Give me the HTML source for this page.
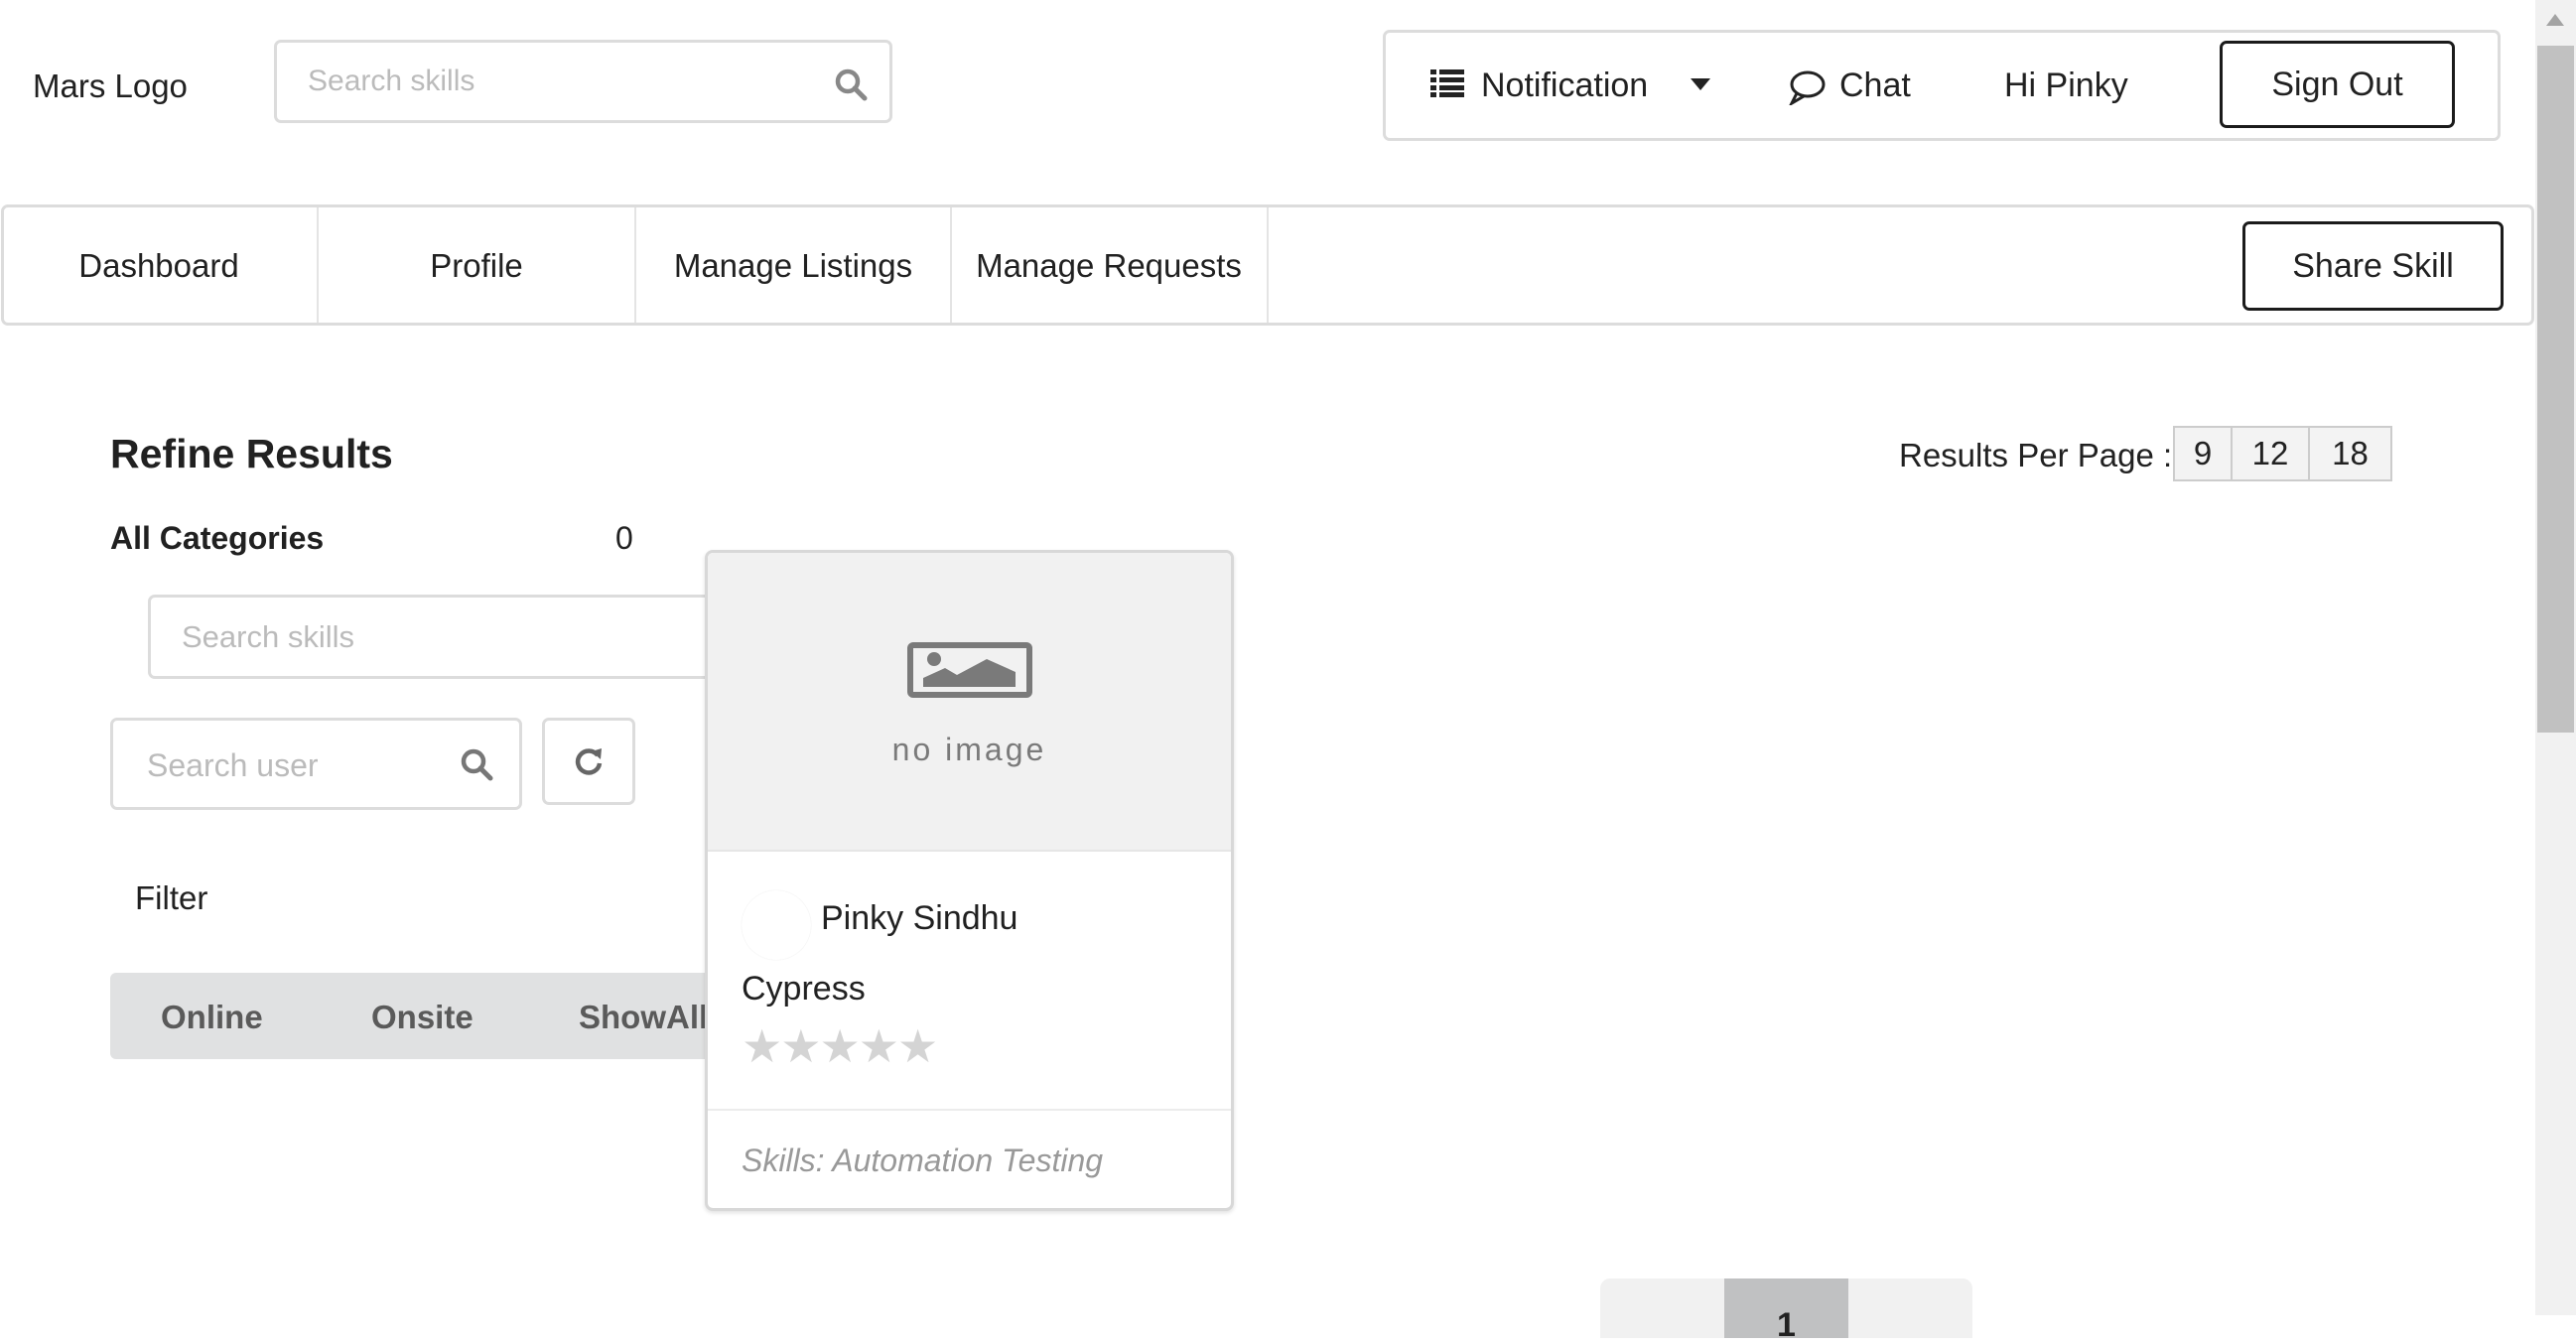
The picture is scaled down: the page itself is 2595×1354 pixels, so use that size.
<!DOCTYPE html>
<html><head><meta charset="utf-8"><style>
*{box-sizing:border-box;margin:0;padding:0}
body{width:2595px;height:1325px;overflow:hidden;background:#fff;font-family:"Liberation Sans",sans-serif;color:#212121;position:relative}
.a{position:absolute}
.t{position:absolute;white-space:nowrap;line-height:1}
.box{position:absolute;border:3px solid #dcdcdc;border-radius:7px;background:#fff}
.ph{color:#bbb}
.btn{position:absolute;border:3px solid #1b1b1b;border-radius:7px;display:flex;align-items:center;justify-content:center;font-size:34px}
</style></head><body>
<div class="t" style="left:33px;top:70px;font-size:33px">Mars Logo</div>
<div class="box" style="left:276px;top:40px;width:623px;height:84px"></div>
<div class="t ph" style="left:310px;top:67px;font-size:30px">Search skills</div>
<svg class="a" style="left:840px;top:68px" width="34" height="34" viewBox="0 0 34 34"><circle cx="14" cy="14" r="10" fill="none" stroke="#888" stroke-width="4.5"/><line x1="21" y1="21" x2="31" y2="31" stroke="#888" stroke-width="5" stroke-linecap="round"/></svg>

<div class="box" style="left:1393px;top:30px;width:1126px;height:112px"></div>
<svg class="a" style="left:1441px;top:70px" width="34" height="28" viewBox="0 0 34 28"><g fill="#222"><rect x="0" y="0" width="6" height="5"/><rect x="9" y="0" width="25" height="5"/><rect x="0" y="8" width="6" height="5"/><rect x="9" y="8" width="25" height="5"/><rect x="0" y="16" width="6" height="5"/><rect x="9" y="16" width="25" height="5"/><rect x="0" y="23" width="6" height="5"/><rect x="9" y="23" width="25" height="5"/></g></svg>
<div class="t" style="left:1492px;top:69px;font-size:34px">Notification</div>
<svg class="a" style="left:1703px;top:79px" width="20" height="12"><polygon points="0,0 20,0 10,12" fill="#222"/></svg>
<svg class="a" style="left:1801px;top:70px" width="38" height="36" viewBox="0 0 38 36"><ellipse cx="20" cy="15" rx="16" ry="12" fill="none" stroke="#222" stroke-width="3"/><path d="M9 24 L4 34 L16 27" fill="none" stroke="#222" stroke-width="3"/></svg>
<div class="t" style="left:1853px;top:69px;font-size:34px">Chat</div>
<div class="t" style="left:2019px;top:69px;font-size:34px">Hi Pinky</div>
<div class="btn" style="left:2236px;top:41px;width:237px;height:88px">Sign Out</div>

<div class="box" style="left:1px;top:206px;width:2552px;height:122px"></div>
<div class="a" style="left:319px;top:209px;width:2px;height:116px;background:#e4e4e4"></div>
<div class="a" style="left:639px;top:209px;width:2px;height:116px;background:#e4e4e4"></div>
<div class="a" style="left:957px;top:209px;width:2px;height:116px;background:#e4e4e4"></div>
<div class="a" style="left:1276px;top:209px;width:2px;height:116px;background:#e4e4e4"></div>
<div class="t" style="left:0;width:320px;text-align:center;top:251px;font-size:33px">Dashboard</div>
<div class="t" style="left:320px;width:320px;text-align:center;top:251px;font-size:33px">Profile</div>
<div class="t" style="left:640px;width:318px;text-align:center;top:251px;font-size:33px">Manage Listings</div>
<div class="t" style="left:958px;width:318px;text-align:center;top:251px;font-size:33px">Manage Requests</div>
<div class="btn" style="left:2259px;top:223px;width:263px;height:90px">Share Skill</div>

<div class="a" style="left:2554px;top:0;width:41px;height:1325px;background:#f1f1f1"></div>
<div class="a" style="left:2556px;top:46px;width:37px;height:692px;background:#c1c1c1"></div>
<svg class="a" style="left:2565px;top:14px" width="18" height="12"><polygon points="0,12 18,12 9,0" fill="#a3a3a3"/></svg>

<div class="t" style="left:111px;top:437px;font-size:41px;font-weight:bold">Refine Results</div>
<div class="t" style="left:111px;top:526px;font-size:32px;font-weight:bold">All Categories</div>
<div class="t" style="left:620px;top:526px;font-size:32px">0</div>
<div class="box" style="left:149px;top:599px;width:600px;height:85px"></div>
<div class="t ph" style="left:183px;top:626px;font-size:31px">Search skills</div>
<div class="box" style="left:111px;top:723px;width:415px;height:93px"></div>
<div class="t ph" style="left:148px;top:755px;font-size:32px">Search user</div>
<svg class="a" style="left:463px;top:753px" width="34" height="34" viewBox="0 0 34 34"><circle cx="14" cy="14" r="10" fill="none" stroke="#777" stroke-width="4.5"/><line x1="21" y1="21" x2="31" y2="31" stroke="#777" stroke-width="5" stroke-linecap="round"/></svg>
<div class="box" style="left:546px;top:723px;width:94px;height:88px"></div>
<svg class="a" style="left:577px;top:751px" width="32" height="32" viewBox="0 0 32 32"><path d="M25 10 A11 11 0 1 0 27 18" fill="none" stroke="#666" stroke-width="4.5"/><polygon points="19,6 29,3 28,14" fill="#666"/></svg>
<div class="t" style="left:136px;top:888px;font-size:33px">Filter</div>
<div class="a" style="left:111px;top:980px;width:650px;height:87px;background:#e0e1e2;border-radius:6px"></div>
<div class="t" style="left:162px;top:1008px;font-size:33px;font-weight:bold;color:#5a5a5a">Online</div>
<div class="t" style="left:374px;top:1008px;font-size:33px;font-weight:bold;color:#5a5a5a">Onsite</div>
<div class="t" style="left:583px;top:1008px;font-size:33px;font-weight:bold;color:#5a5a5a">ShowAll</div>

<div class="a" style="left:710px;top:554px;width:533px;height:666px;background:#fff;border:3px solid #d8d8d8;border-radius:8px;box-shadow:0 2px 4px rgba(0,0,0,.12);overflow:hidden">
<div class="a" style="left:0;top:0;width:100%;height:301px;background:#f1f1f1;border-bottom:2px solid #e6e6e6"></div>
<svg class="a" style="left:201px;top:90px" width="126" height="56" viewBox="0 0 126 56"><rect x="3" y="3" width="120" height="50" rx="3" fill="none" stroke="#7a7a7a" stroke-width="6"/><circle cx="27" cy="17" r="7" fill="#7a7a7a"/><path d="M16 45 L16 36 L38 26 L50 33 L80 17 L109 30 L109 45 Z" fill="#7a7a7a"/></svg>
<div class="t" style="left:0;width:100%;text-align:center;top:182px;font-size:32px;color:#7a7a7a;letter-spacing:3px">no image</div>
<div class="a" style="left:34px;top:340px;width:70px;height:70px;border-radius:50%;background:#fff;box-shadow:0 0 1px rgba(0,0,0,.15)"></div>
<div class="t" style="left:114px;top:351px;font-size:34px">Pinky Sindhu</div>
<div class="t" style="left:34px;top:422px;font-size:34px">Cypress</div>
<div class="t" style="left:34px;top:474px;font-size:46px;color:#d4d4d4;letter-spacing:-2px">★★★★★</div>
<div class="a" style="left:0;top:560px;width:100%;height:2px;background:#ececec"></div>
<div class="t" style="left:34px;top:596px;font-size:32px;font-style:italic;color:#999">Skills: Automation Testing</div>
</div>

<div class="t" style="left:1913px;top:442px;font-size:33px">Results Per Page :</div>
<div class="a" style="left:2189px;top:429px;width:221px;height:56px;border:2px solid #ccc;background:#f3f3f3;display:flex">
<div style="width:58px;border-right:2px solid #ccc;text-align:center;font-size:33px;line-height:52px">9</div>
<div style="width:78px;border-right:2px solid #ccc;text-align:center;font-size:33px;line-height:52px">12</div>
<div style="flex:1;text-align:center;font-size:33px;line-height:52px">18</div>
</div>

<div class="a" style="left:1612px;top:1288px;width:375px;height:60px;background:#f1f1f1;border-radius:10px 10px 0 0"></div>
<div class="a" style="left:1737px;top:1288px;width:125px;height:60px;background:#c0c1c2"></div>
<div class="t" style="left:1737px;width:125px;text-align:center;top:1318px;font-size:34px;font-weight:bold">1</div>
</body></html>
